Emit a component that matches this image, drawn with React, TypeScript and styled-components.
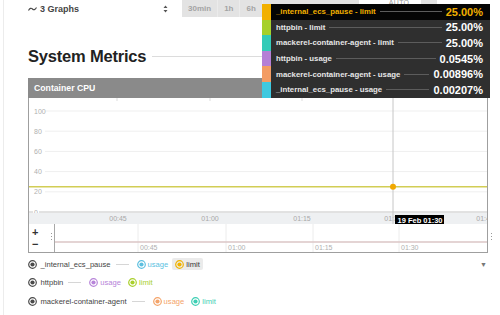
import React from 'react'
import styled, { createGlobalStyle } from 'styled-components'

const GlobalStyle = createGlobalStyle`
  html, body {
    margin: 0;
    padding: 0;
    background: #fff;
  }
  body {
    font-family: 'Liberation Sans', Arial, sans-serif;
    color: #333;
  }
`

const legendSeries = [
  { name: '_internal_ecs_pause', usage: '#5cbfdf', limit: '#f1b300', picked: true },
  { name: 'httpbin', usage: '#b784d9', limit: '#a9cf2c' },
  { name: 'mackerel-container-agent', usage: '#f4a46a', limit: '#3dcfb4' }
]

const tooltipRows = [
  { label: '_internal_ecs_pause - limit', value: '25.00%', color: '#f2b000', active: true },
  { label: 'httpbin - limit', value: '25.00%', color: '#a6d02a' },
  { label: 'mackerel-container-agent - limit', value: '25.00%', color: '#33cbb8' },
  { label: 'httpbin - usage', value: '0.0545%', color: '#b57fd6' },
  { label: 'mackerel-container-agent - usage', value: '0.00896%', color: '#f39c63' },
  { label: '_internal_ecs_pause - usage', value: '0.00207%', color: '#3ec9e0' }
]

const ranges = ['30min', '1h', '6h']

// value (0..100) -> y inside the plot svg
const yOf = (v: number) => 114 - v * 1.01

const PlotChart: React.FC = () => {
  const ticks = [100, 80, 60, 40, 20]
  const xLabels = [
    { x: 89, t: '00:45' },
    { x: 181, t: '01:00' },
    { x: 273, t: '01:15' },
    { x: 364, t: '01:30' },
    { x: 456, t: '01:45' }
  ]
  return (
    <PlotSvg width={458} height={126}>
      {[88, 181, 273].map((x) => (
        <line key={x} x1={x} x2={x} y1={0} y2={3} stroke="#ddd" />
      ))}
      {ticks.map((v) => (
        <g key={v}>
          <line x1={16} x2={458} y1={yOf(v)} y2={yOf(v)} stroke="#efefef" />
          <text x={5} y={yOf(v) + 2.5} fontSize={7} fill="#b0b0b0">
            {v}
          </text>
        </g>
      ))}
      <line x1={0} x2={458} y1={114} y2={114} stroke="#c4c4c4" />
      <rect x={4} y={110} width={6} height={8} fill="#fff" />
      <text x={5} y={116.5} fontSize={7} fill="#b0b0b0">
        0
      </text>
      <rect x={0} y={115} width={458} height={11} fill="#eef0f2" />
      {xLabels.map((l) => (
        <text key={l.t} x={l.x} y={123} fontSize={7} fill="#a8a8a8" textAnchor="middle">
          {l.t}
        </text>
      ))}
      <line x1={0} x2={458} y1={yOf(25)} y2={yOf(25)} stroke="#d2cd55" strokeWidth={1.3} />
      <line x1={364} x2={364} y1={0} y2={126} stroke="#c6c6c6" />
      <circle cx={364} cy={yOf(25)} r={3} fill="#f1a800" />
      <rect x={366} y={117} width={49} height={10} fill="#000" />
      <text x={368.5} y={125} fontSize={7.5} fontWeight={700} fill="#fff">
        19 Feb 01:30
      </text>
    </PlotSvg>
  )
}

const Navigator: React.FC = () => {
  const marks = [
    { x: 83, t: '00:45' },
    { x: 171, t: '01:00' },
    { x: 258, t: '01:15' },
    { x: 344, t: '01:30' }
  ]
  return (
    <NavSvg width={433} height={28}>
      {marks.map((m) => (
        <g key={m.t}>
          <line x1={m.x} x2={m.x} y1={0} y2={28} stroke="#ececec" />
          <text x={m.x + 2} y={26} fontSize={7} fill="#b0b0b0">
            {m.t}
          </text>
        </g>
      ))}
      <line x1={0} x2={433} y1={18} y2={18} stroke="#dbc6c6" strokeWidth={1.5} />
    </NavSvg>
  )
}

const Dot: React.FC<{ color: string }> = ({ color }) => (
  <DotSvg width={9} height={9} viewBox="0 0 9 9">
    <circle cx={4.5} cy={4.5} r={3.8} fill="none" stroke={color} strokeWidth={1.2} />
    <circle cx={4.5} cy={4.5} r={2.1} fill={color} />
  </DotSvg>
)

export default function App() {
  return (
    <>
      <GlobalStyle />
      <Page>
        <Main>
          <TopBar>
            <GraphSelect>
              <GraphLabel>
                <svg width={9} height={6} viewBox="0 0 9 6">
                  <path d="M0.5 4.5 Q2.5 1 4.5 3 T8.5 1.5" fill="none" stroke="#444" strokeWidth={1.1} />
                </svg>
                3 Graphs
              </GraphLabel>
              <svg width={5} height={8} viewBox="0 0 5 8">
                <path d="M2.5 0.5 L4.5 3 H0.5 Z M2.5 7.5 L4.5 5 H0.5 Z" fill="#555" />
              </svg>
            </GraphSelect>
            <RangeGroup>
              {ranges.map((r) => (
                <RangeButton key={r}>{r}</RangeButton>
              ))}
              <RangeRest />
            </RangeGroup>
            <AutoLabel>AUTO</AutoLabel>
            <MiniButton />
          </TopBar>

          <HeadingRow>
            <Title>System Metrics</Title>
            <Rule />
          </HeadingRow>

          <Panel>
            <PanelHeader>Container CPU</PanelHeader>
            <PlotChart />
            <RangeSelector>
              <ZoomControls>
                <ZoomButtons>
                  <ZoomButton>+</ZoomButton>
                  <ZoomButton>−</ZoomButton>
                </ZoomButtons>
                <Grip />
              </ZoomControls>
              <Navigator />
              <RightGrip />
            </RangeSelector>
          </Panel>

          <Legend>
            {legendSeries.map((s, i) => (
              <LegendRow key={s.name}>
                <Dot color="#4a4a4a" />
                <HostName>{s.name}</HostName>
                <Connector />
                <Metric>
                  <Dot color={s.usage} />
                  <MetricName $color={s.usage}>usage</MetricName>
                </Metric>
                <Metric $picked={s.picked}>
                  <Dot color={s.limit} />
                  <MetricName $color={s.picked ? '#333' : s.limit}>limit</MetricName>
                </Metric>
                {i === 0 && <Caret>▼</Caret>}
              </LegendRow>
            ))}
          </Legend>
        </Main>

        <Tooltip>
          {tooltipRows.map((r) => (
            <TipRow key={r.label} $active={r.active}>
              <Swatch $color={r.color} />
              <TipLabel $active={r.active}>{r.label}</TipLabel>
              <TipLine />
              <TipValue $active={r.active}>{r.value}</TipValue>
            </TipRow>
          ))}
        </Tooltip>
      </Page>
    </>
  )
}

const Page = styled.div`
  position: relative;
  width: 500px;
  height: 315px;
  overflow: hidden;
  padding-left: 3px;
  box-sizing: border-box;
  background: #fff;
`

const Main = styled.div`
  height: 100%;
  border-left: 1px solid #ececec;
  padding-left: 24px;
  box-sizing: border-box;
`

const TopBar = styled.div`
  display: flex;
  align-items: flex-start;
  height: 18px;
`

const GraphSelect = styled.div`
  display: flex;
  align-items: center;
  justify-content: space-between;
  width: 140px;
  height: 17px;
  padding-right: 3px;
  margin-right: 11px;
`

const GraphLabel = styled.div`
  display: flex;
  align-items: center;
  gap: 3px;
  font-size: 9px;
  font-weight: 700;
  color: #444;
`

const RangeGroup = styled.div`
  display: flex;
  height: 17px;
  background: #e3e3e3;
`

const RangeButton = styled.div`
  display: flex;
  align-items: center;
  padding: 0 6px;
  font-size: 8px;
  font-weight: 700;
  color: #a3a3a3;
  border-left: 1px solid #ebebeb;

  &:first-child {
    border-left: none;
  }
`

const RangeRest = styled.div`
  width: 96px;
  border-left: 1px solid #ebebeb;
`

const AutoLabel = styled.div`
  margin-left: 30px;
  margin-top: -1px;
  font-size: 7px;
  color: #999;
  letter-spacing: 0.3px;
`

const MiniButton = styled.div`
  width: 16px;
  height: 6px;
  margin-left: 12px;
  background: #e3e3e3;
`

const HeadingRow = styled.div`
  display: flex;
  align-items: center;
  gap: 6px;
  height: 24px;
  margin: 26px 12px 10px 0;
`

const Title = styled.h1`
  margin: 0;
  font-size: 16.5px;
  font-weight: 700;
  color: #222;
  letter-spacing: -0.2px;
`

const Rule = styled.div`
  flex: 1;
  height: 1px;
  background: #dcdcdc;
`

const Panel = styled.div`
  position: relative;
  width: 460px;
  border: 1px solid #9f9f9f;
  border-top: none;
  box-sizing: border-box;
`

const PanelHeader = styled.div`
  height: 20px;
  margin: 0 -1px;
  padding-left: 6px;
  display: flex;
  align-items: center;
  background: #8a8a8a;
  color: #fff;
  font-size: 8.7px;
  font-weight: 700;
`

const PlotSvg = styled.svg`
  display: block;
  font-family: 'Liberation Sans', Arial, sans-serif;
`

const RangeSelector = styled.div`
  display: flex;
  height: 28px;
`

const ZoomControls = styled.div`
  display: flex;
  width: 25px;
  border-right: 1px solid #a8a8a8;
`

const ZoomButtons = styled.div`
  display: flex;
  flex-direction: column;
  justify-content: center;
  width: 20px;
`

const ZoomButton = styled.div`
  height: 12px;
  line-height: 12px;
  padding-left: 3px;
  font-size: 11px;
  font-weight: 700;
  color: #333;
`

const Grip = styled.div`
  width: 1px;
  height: 8px;
  margin: 9px 0 0 2px;
  background: repeating-linear-gradient(#999 0 1px, transparent 1px 3px);
`

const NavSvg = styled.svg`
  display: block;
  font-family: 'Liberation Sans', Arial, sans-serif;
`

const RightGrip = styled.div`
  position: absolute;
  right: -5px;
  bottom: 12px;
  width: 1px;
  height: 7px;
  background: repeating-linear-gradient(#999 0 1px, transparent 1px 3px);
`

const Legend = styled.div`
  display: flex;
  flex-direction: column;
  width: 460px;
  padding-top: 2px;
`

const LegendRow = styled.div`
  display: flex;
  align-items: center;
  height: 18.5px;
`

const DotSvg = styled.svg`
  display: block;
  flex: none;
`

const HostName = styled.span`
  margin-left: 3.5px;
  font-size: 7.6px;
  color: #444;
`

const Connector = styled.div`
  width: 13px;
  height: 1px;
  margin: 0 5px;
  background: #d6d6d6;
`

const Metric = styled.div<{ $picked?: boolean }>`
  display: flex;
  align-items: center;
  gap: 2px;
  height: 12px;
  padding: 0 3px;
  margin-right: 1px;
  border-radius: 2px;
  background: ${(p) => (p.$picked ? '#ebebeb' : 'transparent')};
`

const MetricName = styled.span<{ $color: string }>`
  font-size: 7.6px;
  color: ${(p) => p.$color};
`

const Caret = styled.span`
  margin-left: auto;
  margin-right: 1px;
  font-size: 7px;
  color: #777;
`

const Tooltip = styled.div`
  position: absolute;
  left: 262px;
  top: 4px;
  width: 228px;
  display: flex;
  flex-direction: column;
  background: #2f2f2f;
`

const TipRow = styled.div<{ $active?: boolean }>`
  display: flex;
  align-items: center;
  height: 15.6px;
  background: ${(p) => (p.$active ? '#050505' : 'transparent')};
`

const Swatch = styled.div<{ $color: string }>`
  align-self: stretch;
  width: 9px;
  background: ${(p) => p.$color};
`

const TipLabel = styled.span<{ $active?: boolean }>`
  margin-left: 5px;
  font-size: 7.8px;
  font-weight: 700;
  color: ${(p) => (p.$active ? '#f2b000' : '#e6e6e6')};
  white-space: nowrap;
`

const TipLine = styled.div`
  flex: 1;
  height: 1px;
  margin: 0 4px;
  background: #5c5c5c;
`

const TipValue = styled.span<{ $active?: boolean }>`
  margin-right: 7px;
  font-size: 11px;
  font-weight: 700;
  color: ${(p) => (p.$active ? '#f2b000' : '#fff')};
`
